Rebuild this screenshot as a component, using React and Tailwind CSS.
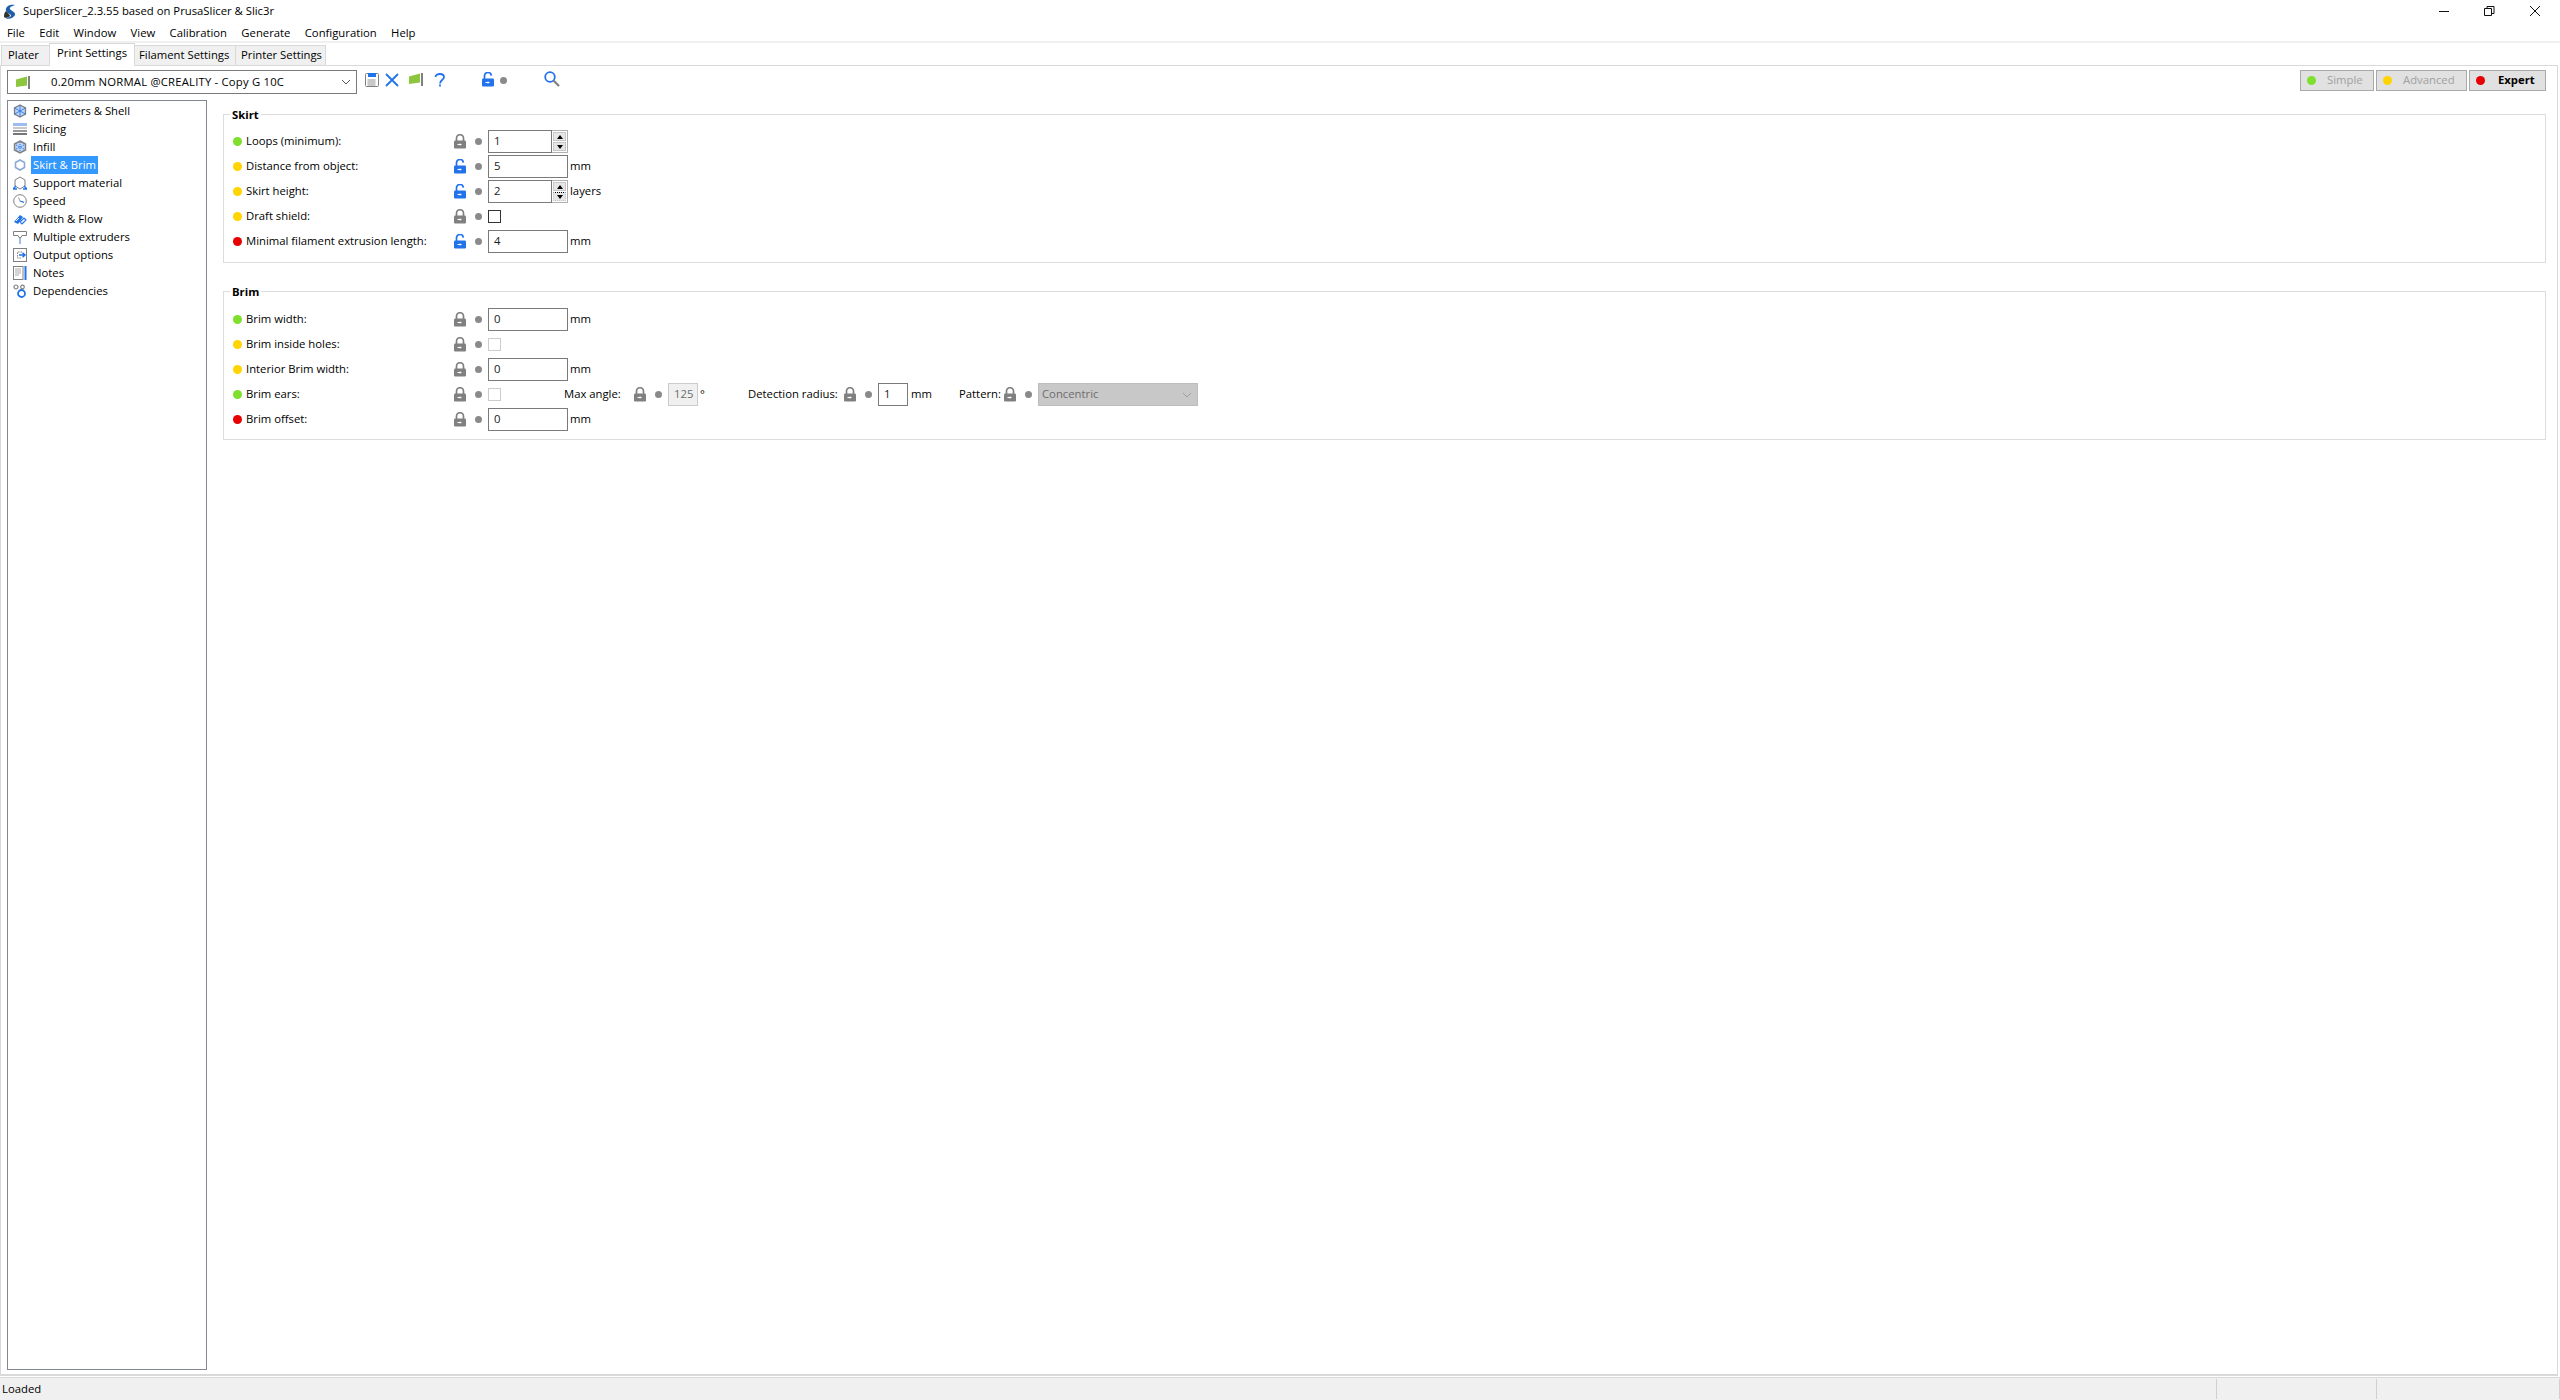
import React from "react";

const GREEN = "#7ee02c";
const YELLOW = "#ffd400";
const RED = "#e60000";

const Lock = ({ open }) => {
    const c = open ? "#2172eb" : "#808080";
    return (
        <svg width="12" height="15" viewBox="0 0 12 15" className="shrink-0">
            {open ? (
                <path d="M2.5 7V4a3.4 3.4 0 0 1 6.8-.4" fill="none" stroke={c} strokeWidth="1.7" />
            ) : (
                <path d="M2.5 7V4.2a3.5 3.5 0 0 1 7 0V7" fill="none" stroke={c} strokeWidth="1.7" />
            )}
            <rect x="0" y="6.5" width="12" height="8" rx="1.2" fill={c} />
            <path d="M3.5 10.5h4M6 9.5v2" stroke="#fff" strokeWidth="1" />
        </svg>
    );
};

const SmallDot = () => <div className="w-[7px] h-[7px] rounded-full bg-[#8a8a8a] shrink-0" />;

const Text = ({ children, className = "" }) => <span className={"whitespace-nowrap " + className}>{children}</span>;

const Field = ({ value, w = "w-[80px]", spin, dotted }) => (
    <div className={"flex h-[23px] shrink-0 " + w}>
        <div className="flex-1 border border-[#7a7a7a] pl-[5px] leading-[19px] text-[#1a1a1a]">{value}</div>
        {spin && (
            <div className="w-[16px] border border-l-0 border-[#b0b0b0] p-px flex flex-col gap-px bg-white">
                <div className="flex-1 bg-[#e6e6e6] border border-[#c8c8c8] flex items-center justify-center">
                    <div className="w-0 h-0 border-x-[3px] border-x-transparent border-b-[4px] border-b-black" />
                </div>
                <div className={"flex-1 bg-[#e6e6e6] border border-[#c8c8c8] flex items-center justify-center " + (dotted ? "border-t-black border-dotted" : "")}>
                    <div className="w-0 h-0 border-x-[3px] border-x-transparent border-t-[4px] border-t-black" />
                </div>
            </div>
        )}
    </div>
);

const Check = ({ disabled }) => (
    <div className={"w-[13px] h-[13px] border bg-white shrink-0 " + (disabled ? "border-[#cccccc]" : "border-[#333333]")} />
);

const Row = ({ dot, label, open, children }) => (
    <div className="flex items-center h-[25px]">
        <div className="w-[9px] h-[9px] rounded-full shrink-0" style={{ background: dot }} />
        <Text className="w-[208px] ml-[4px] shrink-0">{label}</Text>
        <Lock open={open} />
        <div className="ml-[9px] mr-[6px]"><SmallDot /></div>
        {children}
    </div>
);

const Unit = ({ children }) => <Text className="ml-[2px]">{children}</Text>;

const Group = ({ title, className, children }) => (
    <div className={"border border-[#dcdcdc] ml-[16px] mr-[11px] pl-[9px] " + className}>
        <div className="-mt-[8px] h-[16px] leading-[16px] font-bold bg-white w-fit -ml-[3px] px-[2px]">{title}</div>
        {children}
    </div>
);

const treeItems = [
    ["Perimeters & Shell", "perimeters"],
    ["Slicing", "slicing"],
    ["Infill", "infill"],
    ["Skirt & Brim", "skirt"],
    ["Support material", "support"],
    ["Speed", "speed"],
    ["Width & Flow", "width"],
    ["Multiple extruders", "extruders"],
    ["Output options", "output"],
    ["Notes", "notes"],
    ["Dependencies", "deps"],
];

const hex = "M7 1l5.5 3v6L7 13l-5.5-3V4z";

const TreeIcon = ({ name }) => {
    const blue = "#2172eb";
    const gray = "#808080";
    return (
        <svg width="14" height="14" viewBox="0 0 14 14" fill="none" className="shrink-0">
            {name === "perimeters" && <><path d={hex} fill="#bcd3f5" stroke={gray} strokeWidth="1.3" /><path d="M7 1v12M1.5 4l11 6M12.500 4l-11 6" stroke={blue} strokeWidth="0.8" /></>}
            {name === "slicing" && <><rect x="0" y="1" width="14" height="3" fill="#9dbdf0" /><rect x="0" y="5" width="14" height="2" fill="#c9c9c9" /><rect x="0" y="8" width="14" height="2" fill="#999" /><rect x="0" y="11" width="14" height="2" fill="#777" /></>}
            {name === "infill" && <><path d={hex} fill="#bcd3f5" stroke={gray} strokeWidth="1.5" /><path d="M3 5l8 4M3 9l8-4M7 2v10" stroke={blue} strokeWidth="1" strokeDasharray="1 1" /></>}
            {name === "skirt" && <path d="M7 2l4.5 2.500v5L7 12l-4.500-2.500v-5z" stroke="#8aa9d8" strokeWidth="1.6" />}
            {name === "support" && <><path d="M7 1l5 3v6l-5 3-5-3V4z" stroke={gray} strokeWidth="1" /><path d="M0 13l3-3M14 13l-3-3M0 13h4M14 13h-4" stroke={blue} strokeWidth="1.500" /></>}
            {name === "speed" && <><circle cx="7" cy="7" r="6.300" stroke={gray} strokeWidth="1" /><path d="M7 7l4 1.300" stroke={blue} strokeWidth="1.300" /><path d="M7 7L5.500 3.500" stroke={gray} strokeWidth="0.800" /></>}
            {name === "width" && <><path d="M1 10l6-7 3 2-5 7z" fill={blue} /><path d="M7 10l4-4 2 2-4 4z" stroke={blue} strokeWidth="1.200" /><path d="M3 9l3-3" stroke="#fff" /></>}
            {name === "extruders" && <><path d="M0.500 1.500h13v4h-4.500l-1 2h-2l-1-2h-4.500z" stroke={gray} strokeWidth="1" /><path d="M7 8v6" stroke="#9dbdf0" strokeWidth="2" /></>}
            {name === "output" && <><rect x="0.500" y="0.500" width="13" height="13" stroke={gray} /><path d="M9 4H4.500v6H9" stroke={gray} strokeDasharray="1.500 1" /><path d="M6 7h6M9.500 4.800L12 7 9.500 9.200" stroke={blue} strokeWidth="1.500" /></>}
            {name === "notes" && <><rect x="0.500" y="0.500" width="9.500" height="13" stroke={gray} /><path d="M2 3h6M2 5h6M2 7h6M2 9h4" stroke="#aaa" strokeWidth="1.200" /><path d="M12.500 0v14" stroke={blue} strokeWidth="2" /></>}
            {name === "deps" && <><circle cx="3" cy="3" r="2" stroke={gray} strokeWidth="1.200" /><circle cx="9.500" cy="3" r="1.800" stroke={gray} strokeWidth="1.200" /><circle cx="8.500" cy="9.500" r="3.500" stroke={blue} strokeWidth="1.800" /></>}
        </svg>
    );
};

const Flag = () => (
    <svg width="14" height="13" viewBox="0 0 14 13" className="shrink-0">
        <path d="M0 3.500L11 0.500v9L0 11z" fill="#8cc63f" />
        <rect x="12" y="0" width="2" height="13" fill="#808080" />
    </svg>
);

const ModeButton = ({ dot, label, active, className }) => (
    <div className={"h-[21px] border border-[#a9a9a9] bg-[#e1e1e1] flex items-center pl-[6px] " + className}>
        <div className="w-[9px] h-[9px] rounded-full shrink-0" style={{ background: dot }} />
        <Text className={active ? "ml-[13px] font-bold text-black" : "ml-[11px] text-[#a0a0a0]"}>{label}</Text>
    </div>
);

const Tab = ({ children, className }) => (
    <div className={"border border-b-0 border-[#d9d9d9] flex items-center " + className}>{children}</div>
);

export default function App() {
    return (
        <div className="w-[2560px] h-[1400px] flex flex-col bg-white text-black text-[11.3px] overflow-hidden" style={{ fontFamily: '"Open Sans", sans-serif' }}>
            {/* title bar */}
            <div className="h-[26px] flex items-center shrink-0 pb-[4px]">
                <svg width="14" height="15" viewBox="0 0 14 15" className="ml-[3px] shrink-0">
                    <path d="M12 1C6 0 2 3 3 7c1 3 5 2 5 5-2 2-5 2-7 1 3 3 9 2 11-2 1-3-4-4-5-6-1-2 2-3 5-4z" fill="#1d5fa8" />
                    <path d="M3 7C1 9 1 11 1 13c2 1 4 1 6-1 0-2-3-3-4-5z" fill="#333" />
                </svg>
                <Text className="ml-[6px]">SuperSlicer_2.3.55 based on PrusaSlicer &amp; Slic3r</Text>
                <svg width="101" height="14" viewBox="0 0 101 14" fill="none" stroke="#111" strokeWidth="1" className="ml-auto mr-[20px] shrink-0">
                    <path d="M0 7.500h10" />
                    <path d="M45.500 4.500h7v7h-7zM48 4.500v-2h7v7h-2.500" />
                    <path d="M91 2l10 10M101 2L91 12" />
                </svg>
            </div>
            {/* menu */}
            <div className="h-[15px] flex items-center gap-[14.3px] pl-[7px] shrink-0">
                {["File", "Edit", "Window", "View", "Calibration", "Generate", "Configuration", "Help"].map((m) => (
                    <Text key={m}>{m}</Text>
                ))}
            </div>
            <div className="h-[2px] bg-[#f0f0f0] shrink-0" />
            {/* tabs */}
            <div className="h-[22px] flex items-end pl-px bg-white shrink-0">
                <Tab className="w-[48px] h-[20px] bg-[#f0f0f0] pl-[6px] border-r-0">Plater</Tab>
                <Tab className="w-[86px] h-[23px] bg-white pl-[7px] -mb-px relative pb-[3px]">Print Settings</Tab>
                <Tab className="w-[101px] h-[20px] bg-[#f0f0f0] pl-[4px] border-l-0">Filament Settings</Tab>
                <Tab className="w-[90px] h-[20px] bg-[#f0f0f0] pl-[5px] border-l-0">Printer Settings</Tab>
            </div>
            {/* page */}
            <div className="flex-1 flex flex-col min-h-0 border border-[#d9d9d9] border-b-2 mr-[2px]">
                <div className="h-[34px] flex items-start pt-[4px] pl-[6px] pr-[11px] shrink-0">
                    <div className="w-[350px] h-[24px] border border-[#7a7a7a] flex items-center pl-[8px] pr-[5px]">
                        <Flag />
                        <Text className="ml-[21px] flex-1 tracking-[0.2px]">0.20mm NORMAL @CREALITY - Copy G 10C</Text>
                        <svg width="10" height="6" viewBox="0 0 10 6" fill="none" stroke="#555"><path d="M1 1l4 4 4-4" /></svg>
                    </div>
                    <svg width="14" height="14" viewBox="0 0 14 14" fill="none" className="ml-[8px] mt-[3px] shrink-0">
                        <rect x="0.500" y="0.500" width="13" height="13" rx="1" stroke="#808080" />
                        <rect x="3" y="0" width="8" height="4" fill="#2172eb" />
                        <rect x="2.500" y="6" width="8" height="7" fill="#c8c8c8" />
                    </svg>
                    <svg width="14" height="14" viewBox="0 0 14 14" fill="none" stroke="#2172eb" strokeWidth="1.800" className="ml-[6px] mt-[3px] shrink-0">
                        <path d="M1 1l12 12M13 1L1 13" />
                    </svg>
                    <div className="ml-[10px] mt-[3px]"><Flag /></div>
                    <svg width="12" height="14" viewBox="0 0 12 14" fill="none" stroke="#2172eb" strokeWidth="1.800" className="ml-[11px] mt-[3px] shrink-0">
                        <path d="M1.500 4C1.500 0 10 0 10 4c0 3-4 3-4 6.500M6 11.500v2" />
                    </svg>
                    <div className="ml-[36px] mt-[2px]"><Lock open /></div>
                    <div className="ml-[6px] mt-[7px]"><SmallDot /></div>
                    <svg width="16" height="16" viewBox="0 0 16 16" fill="none" className="ml-[37px] mt-[1px] shrink-0">
                        <circle cx="6" cy="6" r="4.800" stroke="#2172eb" strokeWidth="1.800" />
                        <path d="M9.500 9.500l5.500 5.500" stroke="#808080" strokeWidth="2.200" />
                    </svg>
                    <div className="ml-auto flex gap-[2px]">
                        <ModeButton dot={GREEN} label="Simple" className="w-[74px]" />
                        <ModeButton dot={YELLOW} label="Advanced" className="w-[91px]" />
                        <ModeButton dot={RED} label="Expert" active className="w-[77px]" />
                    </div>
                </div>
                <div className="flex-1 flex min-h-0 pb-[4px]">
                    <div className="w-[200px] ml-[6px] border border-[#828790] pt-[1px] pl-[5px] shrink-0">
                        {treeItems.map(([label, icon]) => (
                            <div key={icon} className="h-[18px] flex items-center">
                                <TreeIcon name={icon} />
                                <Text className={"ml-[4px] px-[2px] h-[18px] leading-[17px] " + (icon === "skirt" ? "bg-[#3399ff] text-white" : "")}>{label}</Text>
                            </div>
                        ))}
                    </div>
                    <div className="flex-1 min-w-0 pt-[14px]">
                        <Group title="Skirt" className="h-[149px]">
                            <div className="pt-[6px]">
                                <Row dot={GREEN} label="Loops (minimum):"><Field value="1" spin /></Row>
                                <Row dot={YELLOW} label="Distance from object:" open><Field value="5" /><Unit>mm</Unit></Row>
                                <Row dot={YELLOW} label="Skirt height:" open><Field value="2" spin dotted /><Unit>layers</Unit></Row>
                                <Row dot={YELLOW} label="Draft shield:"><Check /></Row>
                                <Row dot={RED} label="Minimal filament extrusion length:" open><Field value="4" /><Unit>mm</Unit></Row>
                            </div>
                        </Group>
                        <Group title="Brim" className="h-[149px] mt-[28px]">
                            <div className="pt-[7px]">
                                <Row dot={GREEN} label="Brim width:"><Field value="0" /><Unit>mm</Unit></Row>
                                <Row dot={YELLOW} label="Brim inside holes:"><Check disabled /></Row>
                                <Row dot={YELLOW} label="Interior Brim width:"><Field value="0" /><Unit>mm</Unit></Row>
                                <Row dot={GREEN} label="Brim ears:">
                                    <Check disabled />
                                    <Text className="ml-[63px] w-[70px]">Max angle:</Text>
                                    <Lock />
                                    <div className="ml-[9px] mr-[6px]"><SmallDot /></div>
                                    <div className="w-[30px] h-[23px] border border-[#cccccc] bg-[#f0f0f0] text-[#6d6d6d] pl-[5px] leading-[19px] shrink-0">125</div>
                                    <Text className="ml-[2px] w-[48px]">°</Text>
                                    <Text className="w-[96px]">Detection radius:</Text>
                                    <Lock />
                                    <div className="ml-[9px] mr-[6px]"><SmallDot /></div>
                                    <Field value="1" w="w-[30px]" />
                                    <Text className="ml-[3px] w-[48px]">mm</Text>
                                    <Text className="w-[45px]">Pattern:</Text>
                                    <Lock />
                                    <div className="ml-[9px] mr-[6px]"><SmallDot /></div>
                                    <div className="w-[160px] h-[23px] bg-[#c8c8c8] border border-[#bdbdbd] flex items-center pl-[3px] pr-[5px] text-[#6d6d6d] shrink-0">
                                        <Text className="flex-1">Concentric</Text>
                                        <svg width="10" height="6" viewBox="0 0 10 6" fill="none" stroke="#a0a0a0"><path d="M1 1l4 4 4-4" /></svg>
                                    </div>
                                </Row>
                                <Row dot={RED} label="Brim offset:"><Field value="0" /><Unit>mm</Unit></Row>
                            </div>
                        </Group>
                    </div>
                </div>
            </div>
            {/* status bar */}
            <div className="h-[23px] mt-[1px] border-t border-[#d9d9d9] bg-[#f0f0f0] flex items-center shrink-0">
                <Text className="ml-[2px] flex-1">Loaded</Text>
                <div className="w-[160px] h-[20px] border-l border-[#d0d0d0]" />
                <div className="w-[184px] h-[20px] border-x border-[#d0d0d0]" />
            </div>
        </div>
    );
}
